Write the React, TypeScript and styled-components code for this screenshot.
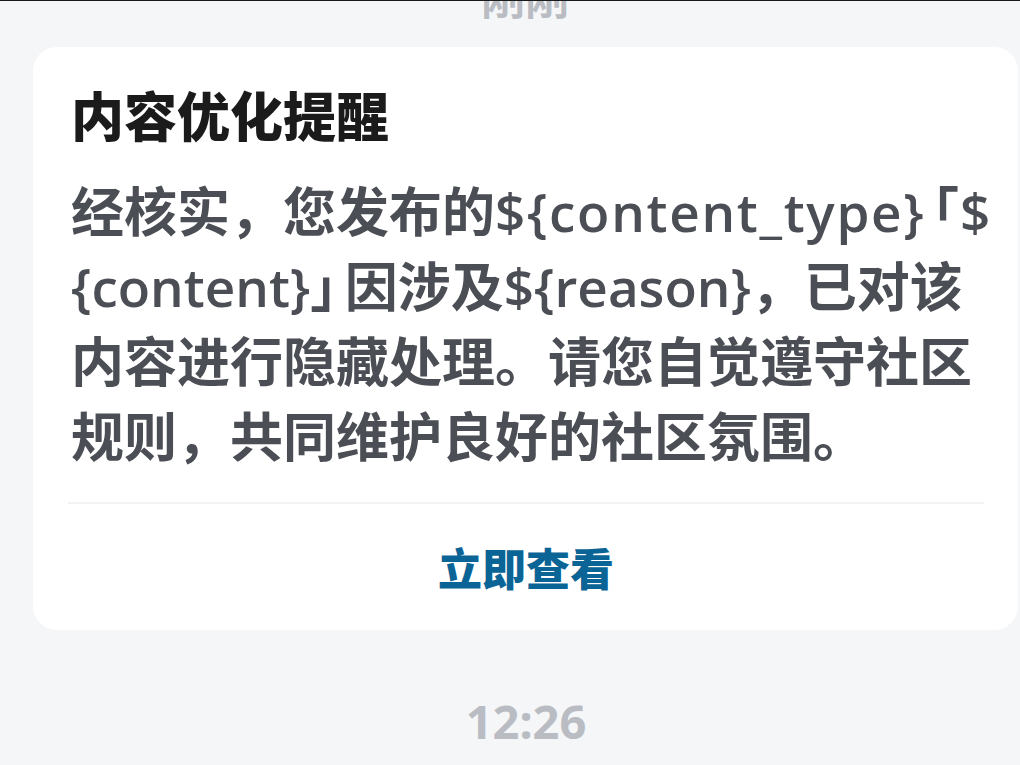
import React from "react";
import styled, { createGlobalStyle } from "styled-components";

const Global = createGlobalStyle`
  html, body { margin: 0; padding: 0; background: #f5f6f8; }
  body { font-family: "Noto Sans", "Noto Sans CJK SC", sans-serif; overflow: hidden; }
`;

const Page = styled.div`
  width: 1020px;
  height: 765px;
  background: #f5f6f8;
  border-top: 1px solid #1a1a1a;
  box-sizing: border-box;
  display: flex;
  flex-direction: column;
  align-items: center;
  overflow: hidden;
`;

const Stamp = styled.div`
  font-family: "Noto Sans CJK SC", sans-serif;
  font-size: 44px;
  line-height: 44px;
  font-weight: 700;
  color: #b9bdc3;
  margin-top: -27px;
  margin-left: 30px;
`;

const Card = styled.section`
  align-self: flex-start;
  margin: 29px 0 0 33px;
  width: 985px;
  background: #ffffff;
  border-radius: 24px;
  padding: 33px 34px 0 35px;
  box-sizing: border-box;
`;

const Title = styled.h1`
  margin: 0;
  padding-left: 3px;
  font-family: "Noto Sans CJK SC", sans-serif;
  font-size: 53px;
  line-height: 68px;
  font-weight: 900;
  color: #1b1b1c;
  white-space: nowrap;
`;

const Body = styled.p`
  margin: 24px 0 0;
  padding-left: 3px;
  font-family: "Noto Sans CJK SC", sans-serif;
  font-size: 53px;
  line-height: 75px;
  font-weight: 600;
  color: #4b4e54;
  white-space: nowrap;
`;

const Latin = styled.span<{ $spread?: number }>`
  font-family: "Open Sans", "Noto Sans", sans-serif;
  font-size: 53px;
  font-weight: 600;
  line-height: 1;
  letter-spacing: ${(p) => p.$spread ?? 0}px;
`;

const Corner = styled.span<{ $before?: number; $after?: number }>`
  font-feature-settings: "halt" 1;
  margin-left: ${(p) => p.$before ?? 0}px;
  margin-right: ${(p) => p.$after ?? 0}px;
`;

const Divider = styled.hr`
  margin: 30px 0 0;
  border: none;
  height: 2px;
  background: #f2f3f5;
`;

const Footer = styled.div`
  height: 126px;
  display: flex;
  align-items: center;
  justify-content: center;
`;

const Action = styled.button`
  border: none;
  background: none;
  padding: 0;
  font-family: "Noto Sans CJK SC", sans-serif;
  font-size: 44px;
  line-height: 52px;
  font-weight: 900;
  color: #0b6496;
  cursor: pointer;
`;

const Time = styled.div`
  margin-top: 67px;
  font-family: "Noto Sans", "Open Sans", sans-serif;
  font-size: 47px;
  line-height: 48px;
  font-weight: 700;
  color: #b9bdc3;
  margin-left: 32px;
`;

export default function App() {
  return (
    <Page>
      <Global />
      <Stamp>刚刚</Stamp>
      <Card>
        <Title>内容优化提醒</Title>
        <Body>
          经核实，您发布的<Latin $spread={1.7}>{"${content_type}"}</Latin>
          <Corner $before={7} $after={1}>「</Corner>
          <Latin>$</Latin>
          <br />
          <Latin>{"{content}"}</Latin>
          <Corner $after={8}>」</Corner>因涉及<Latin>{"${reason}"}</Latin>，已对该
          <br />
          内容进行隐藏处理。请您自觉遵守社区
          <br />
          规则，共同维护良好的社区氛围。
        </Body>
        <Divider />
        <Footer>
          <Action>立即查看</Action>
        </Footer>
      </Card>
      <Time>12:26</Time>
    </Page>
  );
}
